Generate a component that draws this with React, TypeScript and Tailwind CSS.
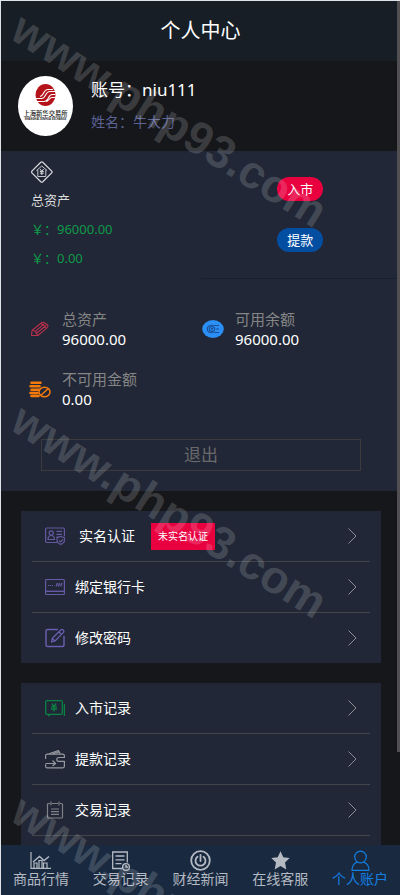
import type { ReactNode } from 'react'

const FONT = "font-['Noto_Sans','Noto_Sans_CJK_SC',sans-serif]"

const stats = [
  { label: '总资产', value: '96000.00', icon: <PencilIcon /> },
  { label: '可用余额', value: '96000.00', icon: <BalanceIcon /> },
  { label: '不可用金额', value: '0.00', icon: <CoinsIcon /> },
]

const tabs = [
  { label: '商品行情', icon: <ChartIcon /> },
  { label: '交易记录', icon: <RecordIcon /> },
  { label: '财经新闻', icon: <NewsIcon /> },
  { label: '在线客服', icon: <StarIcon /> },
  { label: '个人账户', icon: <UserIcon />, active: true },
]

export default function App() {
  return (
    <div className={`relative flex h-screen flex-col overflow-hidden border-l border-t border-[#dfe2e6] bg-[#16171b] text-white ${FONT}`}>
      <header className="flex h-[60px] shrink-0 items-center justify-center bg-[#171e25]">
        <h1 className="text-[20px] leading-6">个人中心</h1>
      </header>

      <main className="flex min-h-0 flex-1 flex-col overflow-y-auto [scrollbar-width:none]">
        {/* Profile */}
        <section className="flex h-[90px] shrink-0 items-center gap-[18px] pl-[17px]">
          <Avatar />
          <div className="flex flex-col gap-2">
            <p className="text-[17px] leading-6">账号：niu111</p>
            <p className="text-[14px] leading-6 text-[#5b6294]">姓名：牛大力</p>
          </div>
        </section>

        {/* Assets */}
        <section className="shrink-0 bg-[#212736] pb-5">
          <div className="grid h-32 grid-cols-2">
            <div className="flex flex-col pl-[30px] pt-[10px]">
              <AssetIcon />
              <p className="mt-[5px] text-[13px] leading-6 text-[#dcdcdc]">总资产</p>
              <p className="mt-[5px] text-[13px] leading-6 text-[#0e9a48]">￥：96000.00</p>
              <p className="mt-[5px] text-[13px] leading-6 text-[#0e9a48]">￥：0.00</p>
            </div>
            <div className="flex flex-col items-center gap-[27px] border-b border-[#16202f] pt-[26px]">
              <button type="button" className="h-6 w-[46px] rounded-full bg-[#e8003f] text-[13px] leading-6">入市</button>
              <button type="button" className="h-6 w-[46px] rounded-full bg-[#044ea2] text-[13px] leading-6">提款</button>
            </div>
          </div>

          <div className="grid grid-cols-2 gap-y-5 pl-7 pr-[25px] pt-[30px]">
            {stats.map((s) => (
              <div key={s.label} className="flex items-center gap-[11px]">
                {s.icon}
                <div className="text-[15px] leading-5">
                  <p className="text-[#858585]">{s.label}</p>
                  <p>{s.value}</p>
                </div>
              </div>
            ))}
          </div>

          <div className="pl-10 pr-[39px] pt-[30px]">
            <button type="button" className="h-8 w-full border border-[#3b3b3d] text-[17px] leading-7 text-[#69696b]">退出</button>
          </div>
        </section>

        <ul className="ml-5 mr-[19px] mt-5 shrink-0 bg-[#212736] px-[11px]">
          <Row icon={<IdIcon />} label="实名认证" badge="未实名认证" />
          <Row icon={<CardIcon />} label="绑定银行卡" />
          <Row icon={<EditIcon />} label="修改密码" />
        </ul>

        <ul className="ml-5 mr-[19px] mt-5 flex-1 bg-[#212736] px-[11px]">
          <Row icon={<DepositIcon />} label="入市记录" />
          <Row icon={<WalletIcon />} label="提款记录" />
          <Row icon={<NoteIcon />} label="交易记录" />
          <li />
        </ul>
      </main>

      <nav className="grid h-[50px] shrink-0 grid-cols-5 bg-[#182940]">
        {tabs.map((t) => (
          <a
            key={t.label}
            href="#"
            className={`flex flex-col items-center pt-[5px] text-[14px] leading-4 ${t.active ? 'text-[#1580e0]' : 'text-[#b5bac2]'}`}
          >
            {t.icon}
            <span>{t.label}</span>
          </a>
        ))}
      </nav>

      <div className="absolute right-0 top-0 h-[84%] w-[3px] bg-[#514f52]" />
      <Watermark />
    </div>
  )
}

function Row({ icon, label, badge }: { icon: ReactNode; label: string; badge?: string }) {
  return (
    <li className="border-b border-[#424549] last:border-b-0">
      <a href="#" className="flex h-[50px] items-center pl-[13px] pr-3 text-[14px] leading-5">
        {icon}
        <span className={badge ? 'ml-[14px]' : 'ml-[10px]'}>{label}</span>
        {badge && <span className="ml-4 h-[27px] bg-[#e8003f] px-[7px] text-[10px] leading-[27px]">{badge}</span>}
        <svg className="ml-auto" width="11" height="18" viewBox="0 0 11 18" fill="none" stroke="#8b8d92">
          <path d="M1.500 1.500 9 9l-7.500 7.500" />
        </svg>
      </a>
    </li>
  )
}

function Watermark() {
  return (
    <div aria-hidden="true" className="pointer-events-none absolute inset-0 overflow-hidden">
      {[0, 1, 2].map((i) => (
        <div key={i} className="h-[391px] pl-[5px]">
          <p className="w-max origin-bottom-left rotate-[32deg] font-['Liberation_Sans',sans-serif] text-[46px] font-bold leading-10 text-white/16">
            www.php93.com
          </p>
        </div>
      ))}
    </div>
  )
}

function Avatar() {
  return (
    <svg width="55" height="60" viewBox="0 0 55 60">
      <ellipse cx="27.500" cy="30" rx="27.500" ry="30" fill="#fff" />
      <ellipse cx="27.500" cy="19" rx="10" ry="11" fill="#b5131a" />
      <path d="M17 22.500h7c4 0 3-7 8-7h5M18 25.500h8c5 0 4-7 8-7h3M22 20.500c4 0 3-7 8-7h5M28 25.500c3 0 3-4 6-4h3" fill="none" stroke="#fff" strokeWidth="1.100" />
      <text x="27.500" y="40" textAnchor="middle" fontSize="6.300" fontWeight="500" fill="#111">上海新华交易所</text>
      <text x="27.500" y="44" textAnchor="middle" fontSize="2.700" fontWeight="700" fill="#222">SHANGHAI XINHUA EXCHANGE</text>
    </svg>
  )
}

function AssetIcon() {
  return (
    <svg width="22" height="22" viewBox="0 0 22 22" fill="none" stroke="#d5d7db" strokeLinejoin="round">
      <path d="M9.800 1.300a1.500 1.500 0 0 1 2 0l8.900 8.800a1.500 1.500 0 0 1 0 1.800l-8.900 8.800a1.500 1.500 0 0 1-2 0L.9 11.900a1.500 1.500 0 0 1 0-1.800z" strokeWidth="1.300" />
      <path d="m5.500 9.500 5.300-4.500 5.300 4.500M6.800 9v6.500h8V9" strokeWidth=".9" />
      <path d="m9 8 1.800 2.300L12.600 8M8.900 10.500h3.800M8.900 12.200h3.800M10.800 10.300V14" strokeWidth="1" />
    </svg>
  )
}

function PencilIcon() {
  return (
    <svg width="22" height="22" viewBox="0 0 22 22" fill="none" stroke="#b8304c" strokeWidth="1.100" strokeLinejoin="round">
      <path d="M2.500 17.500 3 12.500 12.500 4.800q1.200-.8 2.400-.4l3.600 2.400q1 1.200 0 2.600L9 17.500z" />
      <path d="m3 12.500 3.500.7.700 2.300 1.800 2M6.500 13.200l9-7.500M7.500 15.300l9.800-8M12 5.500l5 4" />
    </svg>
  )
}

function BalanceIcon() {
  return (
    <svg width="22" height="22" viewBox="0 0 22 22" fill="none">
      <ellipse cx="11" cy="11" rx="10.800" ry="9" fill="#2b8ff8" />
      <g stroke="#1b4f94" strokeWidth="1.100">
        <path d="M11 7.200H9.500q-4.200.3-4.200 3.800t4.200 3.800H11" />
        <ellipse cx="10" cy="11" rx="2.700" ry="2.500" />
        <path d="m9 9.800 1 1.200 1-1.200M10 11v1.800M11.500 7.500H17M14 11h3M11.500 14.500H17" />
      </g>
    </svg>
  )
}

function CoinsIcon() {
  return (
    <svg width="22" height="22" viewBox="0 0 22 22" fill="none" stroke="#f57a0c">
      <path d="M2.500 4.800h9M1.500 8.300h9M2.500 11.800h8M1.500 15h7M2.500 18h7" strokeWidth="2.600" strokeLinecap="round" />
      <ellipse cx="15.500" cy="14" rx="5.500" ry="4.800" fill="#212736" strokeWidth="1.500" />
      <path d="m12 17.300 7-6.600" strokeWidth="1.500" />
    </svg>
  )
}

function IdIcon() {
  return (
    <svg width="20" height="20" viewBox="0 0 20 20" fill="none" stroke="#64589f" strokeWidth="1.200">
      <path d="M12 16.500H1.800q-1.200 0-1.200-1.200V3.200Q.6 2 1.800 2h16.400q1.200 0 1.200 1.200v7" />
      <circle cx="6.200" cy="7" r="2.100" />
      <path d="M3 13.500q0-4 3.200-4t3.200 4zM11.500 5.300h5.500M11.500 8.300h5.500M11.500 11h2" />
      <path d="m15.700 10.500 3.700 1.300v3q0 2.200-3.700 3.700-3.700-1.500-3.700-3.700v-3zM14 14.500l1.500 1.400 2.300-2.600" />
    </svg>
  )
}

function CardIcon() {
  return (
    <svg width="20" height="20" viewBox="0 0 20 20" fill="none" stroke="#6659a6" strokeWidth="1.200">
      <rect x=".6" y="2.500" width="18.800" height="15" rx="1" />
      <path d="M.6 14.300h18.800" strokeWidth="1.400" />
      <path d="M3 8.500h5" strokeDasharray="1.300 .7" />
      <path d="m11 9.500 1.500-3.500M13.200 9.500 14.700 6M15.500 9.500 17 6" strokeWidth="1.400" />
    </svg>
  )
}

function EditIcon() {
  return (
    <svg width="20" height="20" viewBox="0 0 20 20" fill="none" stroke="#6a5cae" strokeWidth="1.500" strokeLinejoin="round">
      <path d="M13 1.500H2.500Q1 1.500 1 3v14q0 1.500 1.500 1.500h15q1.500 0 1.500-1.500V8" />
      <path d="m6.500 14 .8-3.700L16 1.800q1.200-.8 2.300.3t.2 2.300l-8.500 8.600zM14 4l2.500 2.500M7.300 10.500 9.800 13" strokeWidth="1.300" />
    </svg>
  )
}

function DepositIcon() {
  return (
    <svg width="20" height="20" viewBox="0 0 20 20" fill="none" stroke="#0a8243" strokeWidth="1.300">
      <rect x=".7" y="2.700" width="16.600" height="13.600" rx="1" />
      <path d="M19.400 6v12M3 17.500h1.500" />
      <path d="m6.800 5.500 2.200 3 2.200-3M6 8.800h6M6 11h6M9 8.500v5" />
    </svg>
  )
}

function WalletIcon() {
  return (
    <svg width="20" height="20" viewBox="0 0 20 20" fill="none" stroke="#9699a0" strokeWidth="1.200" strokeLinejoin="round">
      <path d="M.6 10V7q0-1.800 1.800-1.800h15.200q1.800 0 1.800 1.800v1.500h-5.600q-2 0-2 1.900t2 1.900h5.600v5q0 1.500-1.500 1.500H2q-1.400 0-1.400-1.500v-2" />
      <path d="m4 4.800 9.500-3.200 1.700 3.200M8 4.800l6-1.800M.6 14.500h9.600M7.500 11.500l3 3-3 2.500" />
    </svg>
  )
}

function NoteIcon() {
  return (
    <svg width="20" height="20" viewBox="0 0 20 20" fill="none" stroke="#7e8187" strokeWidth="1.200">
      <path d="M5 3.500H3.500q-1 0-1 1V17q0 1 1 1h13q1 0 1-1V4.500q0-1-1-1H15M7 3.500h6M6 1.500v4M14 1.500v4M6 9h8M6 11.700h8M6 14.300h8" />
    </svg>
  )
}

function ChartIcon() {
  return (
    <svg width="21" height="21" viewBox="0 0 21 21" fill="none" stroke="currentColor" strokeWidth="1.200">
      <path d="M1 2v16.300h20" />
      <path d="M4 18v-5h3v5M9 18v-7.500h3V18M13.500 18v-5h3.500v5" />
      <path d="m3 12 6.500-5.500 4.500 4 5-4" strokeWidth="1.400" />
    </svg>
  )
}

function RecordIcon() {
  return (
    <svg width="21" height="21" viewBox="0 0 21 21" fill="none" stroke="currentColor" strokeWidth="1.300">
      <path d="M12 18.500H2.700V2h14.600v10.500M5.500 6h9M5.500 9.800h9M5.500 13.600h6" />
      <circle cx="16" cy="17" r="3.400" />
      <path d="M16 15v2.200h2" />
    </svg>
  )
}

function NewsIcon() {
  return (
    <svg width="21" height="21" viewBox="0 0 21 21" fill="none" stroke="currentColor" strokeWidth="1.800">
      <circle cx="10.500" cy="10.500" r="9.300" />
      <path d="M7.500 6.700a5 5 0 1 0 6 0M10.500 5v6" strokeLinecap="round" />
    </svg>
  )
}

function StarIcon() {
  return (
    <svg width="21" height="21" viewBox="0 0 21 21" fill="currentColor">
      <path d="m10.500 1.300 2.800 6 6.400.8-4.700 4.500 1.300 6.900-5.800-3.400-5.800 3.400L6 12.600 1.300 8.100l6.400-.8z" />
    </svg>
  )
}

function UserIcon() {
  return (
    <svg width="21" height="21" viewBox="0 0 21 21" fill="none" stroke="currentColor" strokeWidth="1.200">
      <circle cx="10.500" cy="7" r="5.800" />
      <path d="M7.500 12Q2 14 2 20.300h17Q19 14 13.500 12" />
    </svg>
  )
}
